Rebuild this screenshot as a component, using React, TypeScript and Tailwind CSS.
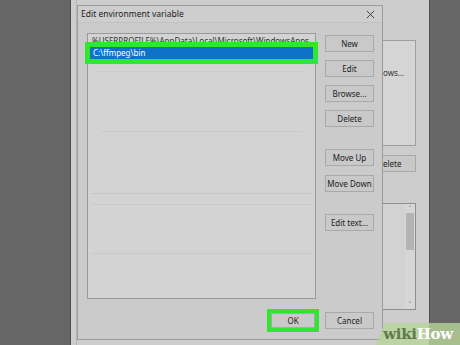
import React from "react";

const font = { fontFamily: '"Noto Sans", "Liberation Sans", sans-serif' };

const Btn: React.FC<{ label: string; className?: string }> = ({ label, className }) => (
  <div
    className={`h-[17px] w-[49px] flex items-center justify-center border border-[#a9a9a9] bg-[#c9c9c9] text-[8px] text-[#222] leading-none ${className ?? ""}`}
  >
    {label}
  </div>
);

export default function App() {
  const sideButtons = [
    { label: "New", mt: "mt-0" },
    { label: "Edit", mt: "mt-[8px]" },
    { label: "Browse...", mt: "mt-[8px]" },
    { label: "Delete", mt: "mt-[8px]" },
    { label: "Move Up", mt: "mt-[22px]" },
    { label: "Move Down", mt: "mt-[9px]" },
    { label: "Edit text...", mt: "mt-[22px]" },
  ];

  return (
    <div className="w-[460px] h-[345px] flex bg-[#666666] overflow-hidden relative" style={font}>
      {/* dark desktop left */}
      <div className="w-[70px] h-full shrink-0" />

      {/* window behind the dialog */}
      <div className="w-[360px] h-full shrink-0 flex bg-[#cdcdcd] border-l border-r border-[#505050]">
        <div className="w-[6px] shrink-0 border-r border-[#b5b5b5]" />

        {/* dialog */}
        <div className="w-[306px] mt-[5px] h-[335px] shrink-0 flex flex-col bg-[#cbcbcb] border border-[#9c9c9c]">
          <div className="h-[17px] shrink-0 flex items-center justify-between pl-[3px] pr-[7px] bg-[#cecece] border-b border-[#c2c2c2]">
            <span className="text-[8.5px] text-[#222] leading-none">Edit environment variable</span>
            <svg width="9" height="9" viewBox="0 0 10 10" className="text-[#333]">
              <path d="M1 1 L9 9 M9 1 L1 9" stroke="currentColor" strokeWidth="1" />
            </svg>
          </div>

          <div className="flex pl-[9px] pt-[10px]">
            {/* list */}
            <div className="w-[229px] h-[266px] shrink-0 flex flex-col bg-[#d3d3d3] border border-[#9a9a9a] pt-[1px] px-[1px]">
              <div className="h-[12px] flex items-center pl-[3px] text-[8px] text-[#333] whitespace-nowrap overflow-hidden leading-none">
                %USERPROFILE%\AppData\Local\Microsoft\WindowsApps
              </div>
              <div className="h-[12px] flex items-center pl-[3px] mx-[1px] bg-[#0f72c9] text-[8px] text-white leading-none outline-5 outline-solid outline-[#2fe630]">
                C:\ffmpeg\bin
              </div>
              <div className="mt-[12px] mx-[8px] border-t border-[#cbcbcb]" />
              <div className="mt-[59px] mx-[12px] border-t border-[#c9c9c9]" />
              <div className="mt-[61px] mx-[2px] border-t border-[#c6c6c6]" />
              <div className="mt-[10px] mx-[2px] border-t border-[#cacaca]" />
              <div className="mt-[48px] mx-[2px] border-t border-[#c8c8c8]" />
            </div>

            {/* side buttons */}
            <div className="flex flex-col ml-[9px] pt-[2px]">
              {sideButtons.map((b) => (
                <Btn key={b.label} label={b.label} className={b.mt} />
              ))}
            </div>
          </div>

          <div className="flex justify-end gap-[10px] pr-[8px] mt-[13px]">
            <div className="h-[15px] w-[44px] mt-[1px] flex items-center justify-center border border-[#a9a9a9] bg-[#c9c9c9] text-[8px] text-[#222] leading-none outline-4 outline-solid outline-[#2fe630]">
              OK
            </div>
            <Btn label="Cancel" />
          </div>
        </div>

        {/* right part of the back window */}
        <div className="flex-1 flex flex-col">
          <div className="mt-[40px] w-[33px] h-[106px] bg-[#d5d5d5] border border-l-0 border-[#9e9e9e] pt-[28px] text-[8px] text-[#333] leading-none">
            ows...
          </div>
          <div className="mt-[9px] w-[33px] h-[17px] flex items-center bg-[#c8c8c8] border border-l-0 border-[#a9a9a9] text-[8px] text-[#222] leading-none">
            elete
          </div>
          <div className="mt-[31px] w-[33px] h-[107px] flex bg-[#d2d2d2] border border-l-0 border-[#8e8e8e]">
            <div className="flex-1" />
            <div className="w-[10px] flex flex-col items-center bg-[#d6d6d6]">
              <span className="text-[7px] leading-[9px] text-[#222]">˄</span>
              <div className="w-[8px] h-[37px] bg-[#b3b3b3]" />
              <div className="flex-1" />
              <span className="text-[7px] leading-[9px] text-[#222]">˅</span>
            </div>
          </div>
        </div>
      </div>

      {/* wikiHow mark */}
      <div className="absolute right-0 bottom-0 w-[84px] h-[22px] bg-[#b8d49a]/80 flex items-center justify-center [clip-path:polygon(10%_0,100%_0,100%_100%,0_100%)]">
        <span
          className="text-[15px] font-bold leading-none tracking-[-0.3px]"
          style={{ fontFamily: '"DejaVu Serif", "Liberation Serif", serif' }}
        >
          <span className="text-[#5f7a4a]">wiki</span>
          <span className="text-white">How</span>
        </span>
      </div>
    </div>
  );
}
